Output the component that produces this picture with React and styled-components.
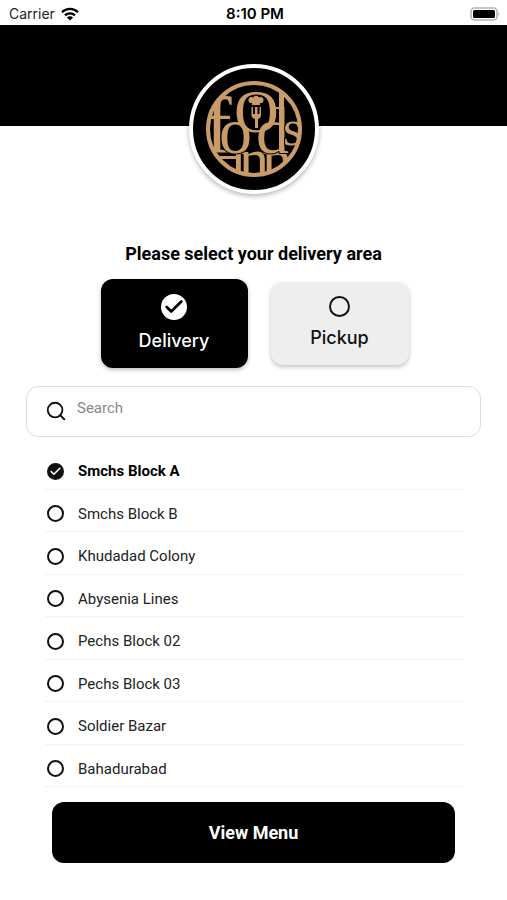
import React, { useState } from "react";
import styled, { createGlobalStyle } from "styled-components";
import { Check, Search } from "lucide-react";

const areas = [
  "Smchs Block A",
  "Smchs Block B",
  "Khudadad Colony",
  "Abysenia Lines",
  "Pechs Block 02",
  "Pechs Block 03",
  "Soldier Bazar",
  "Bahadurabad",
];

const orderTypes = ["Delivery", "Pickup"];

const WifiIcon = () => (
  <svg width="18" height="14" viewBox="0 0 18 14" aria-hidden="true">
    <g fill="none" stroke="#000" strokeWidth="2.3">
      <path d="M1 5.2a11.4 11.4 0 0 1 16 0" />
      <path d="M4 8.4a7.2 7.2 0 0 1 10 0" />
    </g>
    <path d="M9 13.6 5.9 10.5a4.4 4.4 0 0 1 6.2 0z" />
  </svg>
);

const BatteryIcon = () => (
  <svg width="31" height="14" viewBox="0 0 31 14" aria-hidden="true">
    <rect x="1" y="1" width="26" height="12" rx="3.5" fill="#fff" stroke="#b5b5b5" strokeWidth="1.6" />
    <rect x="3" y="3" width="22" height="8" rx="1.5" />
    <path d="M28.5 4.5q2 2.5 0 5z" fill="#b5b5b5" />
  </svg>
);

const Logo = () => (
  <svg width="96" height="96" viewBox="0 0 96 96" role="img" aria-label="Foods Inn">
    <defs>
      <clipPath id="logo-ring">
        <circle cx="48" cy="48" r="46" />
      </clipPath>
    </defs>
    <g
      clipPath="url(#logo-ring)"
      fill="#c89b69"
      fontFamily="Liberation Serif, serif"
    >
      {/* bottom row, cut by the ring */}
      <path d="M14 75h17v3H14z" />
      <text x="24" y="98" fontSize="60">ı</text>
      <text x="33" y="98" fontSize="60">n</text>
      <text x="56" y="98" fontSize="60">n</text>

      {/* middle row */}
      <text x="-1" y="72" fontSize="80">f</text>
      <g stroke="#000" strokeWidth="2" paintOrder="stroke">
        <text x="13" y="72" fontSize="66">o</text>
        <text x="50" y="72" fontSize="66">d</text>
        <text x="77" y="64" fontSize="50">s</text>
      </g>
      <rect x="73" y="8" width="5" height="60" />

      {/* tall O with the chef fork */}
      <text x="28" y="51" fontSize="62">O</text>
      <path d="M46 24v-2a3 3 0 1 1 1-5.500 3.500 3.500 0 0 1 6 0 3 3 0 1 1 1 5.500V24z" />
      <path d="M45.500 26h1.500v7h2v-7h2.500v7h2v-7H55v8q0 3-3 4v9h-3v-9q-3.500-1-3.500-4z" />
    </g>
    <circle cx="48" cy="48" r="46" fill="none" stroke="#c89b69" strokeWidth="4" />
  </svg>
);

const Radio = ({ name, value, checked, onChange, size, tone }) => (
  <RadioWrap $size={size}>
    <RadioInput
      type="radio"
      name={name}
      value={value}
      checked={checked}
      onChange={onChange}
      $tone={tone}
    />
    {checked && (
      <Check size={size - 4} strokeWidth={3} color={tone === "#fff" ? "#000" : "#fff"} />
    )}
  </RadioWrap>
);

const App = () => {
  const [orderType, setOrderType] = useState("Delivery");
  const [area, setArea] = useState("Smchs Block A");
  const [query, setQuery] = useState("");

  const visibleAreas = areas.filter((item) =>
    item.toLowerCase().includes(query.toLowerCase())
  );

  return (
    <>
      <GlobalStyle />
      <Page>
        <StatusBar>
          <Carrier>
            Carrier
            <WifiIcon />
          </Carrier>
          <Clock>8:10 PM</Clock>
          <Battery>
            <BatteryIcon />
          </Battery>
        </StatusBar>
        <Hero />
        <LogoBadge>
          <Logo />
        </LogoBadge>

        <Title>Please select your delivery area</Title>
        <OrderTypes>
          {orderTypes.map((type) => {
            const active = type === orderType;
            return (
              <OrderCard key={type} $active={active}>
                <Radio
                  name="orderType"
                  value={type}
                  checked={active}
                  onChange={() => setOrderType(type)}
                  size={active ? 26 : 21}
                  tone={active ? "#fff" : "#111"}
                />
                {type}
              </OrderCard>
            );
          })}
        </OrderTypes>

        <SearchBox>
          <Search size={22} strokeWidth={2} color="#111" />
          <SearchInput
            type="text"
            placeholder="Search"
            aria-label="Search"
            value={query}
            onChange={(event) => setQuery(event.target.value)}
          />
        </SearchBox>

        <AreaList>
          {visibleAreas.map((item) => (
            <AreaRow key={item} $active={item === area}>
              <Radio
                name="area"
                value={item}
                checked={item === area}
                onChange={() => setArea(item)}
                size={17}
                tone="#111"
              />
              {item}
            </AreaRow>
          ))}
        </AreaList>

        <MenuButton type="button">View Menu</MenuButton>
      </Page>
    </>
  );
};

const GlobalStyle = createGlobalStyle`
  * {
    box-sizing: border-box;
  }
  body {
    margin: 0;
    background: #fff;
    color: #000;
    font-family: Roboto, sans-serif;
  }
`;

const Page = styled.main`
  display: flex;
  flex-direction: column;
  min-height: 100vh;
  padding-bottom: 37px;
`;

const StatusBar = styled.div`
  display: grid;
  grid-template-columns: 1fr auto 1fr;
  align-items: center;
  height: 25px;
  padding: 2px 6px 0 9px;
  font-family: Inter, sans-serif;
  font-size: 14px;
`;

const Carrier = styled.span`
  display: flex;
  align-items: center;
  gap: 6px;
  color: #222;
`;

const Clock = styled.span`
  font-size: 15px;
  line-height: 18px;
  font-weight: 600;
`;

const Battery = styled.span`
  display: flex;
  justify-content: flex-end;
`;

const Hero = styled.div`
  height: 101px;
  background: #000;
`;

const LogoBadge = styled.div`
  display: grid;
  place-items: center;
  align-self: center;
  width: 130px;
  height: 130px;
  margin-top: -62px;
  border: 4px solid #fff;
  border-radius: 50%;
  background: #000;
  box-shadow: 0 2px 5px rgba(0, 0, 0, 0.3);
`;

const Title = styled.h1`
  margin: 48px 0 13px;
  font-size: 18px;
  line-height: 24px;
  font-weight: 700;
  text-align: center;
`;

const OrderTypes = styled.div`
  display: flex;
  justify-content: center;
  align-items: center;
  gap: 23px;
  padding-left: 2px;
`;

const OrderCard = styled.label`
  display: flex;
  flex-direction: column;
  align-items: center;
  justify-content: center;
  gap: 8px;
  width: ${({ $active }) => ($active ? "147px" : "138px")};
  height: ${({ $active }) => ($active ? "89px" : "83px")};
  border-radius: 12px;
  background: ${({ $active }) => ($active ? "#000" : "#eee")};
  color: ${({ $active }) => ($active ? "#fff" : "#111")};
  box-shadow: 0 2px 4px rgba(0, 0, 0, 0.25);
  font-family: Inter, sans-serif;
  font-size: 18px;
  line-height: 26px;
  font-weight: 500;
  cursor: pointer;
`;

const RadioWrap = styled.span`
  display: grid;
  place-items: center;
  flex: none;
  width: ${({ $size }) => $size}px;
  height: ${({ $size }) => $size}px;

  > * {
    grid-area: 1 / 1;
  }
  svg {
    pointer-events: none;
  }
`;

const RadioInput = styled.input`
  appearance: none;
  width: 100%;
  height: 100%;
  margin: 0;
  border: 2px solid ${({ $tone }) => $tone};
  border-radius: 50%;
  cursor: pointer;

  &:checked {
    background: ${({ $tone }) => $tone};
  }
`;

const SearchBox = styled.div`
  display: flex;
  align-items: center;
  gap: 10px;
  height: 51px;
  margin: 18px 26px 10px;
  padding: 0 18px 2px;
  border: 1px solid #ddd;
  border-radius: 12px;

  svg {
    flex: none;
  }
`;

const SearchInput = styled.input`
  flex: 1;
  min-width: 0;
  padding: 0 0 6px;
  border: none;
  outline: none;
  background: transparent;
  font-family: inherit;
  font-size: 15px;

  &::placeholder {
    color: #888;
  }
`;

const AreaList = styled.div`
  display: grid;
  flex: 1;
  grid-auto-rows: minmax(40px, 1fr);
  margin: 0 42px 0 45px;
`;

const AreaRow = styled.label`
  display: flex;
  align-items: center;
  gap: 14px;
  padding: 7px 2px 0;
  border-bottom: 1px solid #f2f2f2;
  color: ${({ $active }) => ($active ? "#000" : "#222")};
  font-size: 15px;
  font-weight: ${({ $active }) => ($active ? 700 : 400)};
  cursor: pointer;
`;

const MenuButton = styled.button`
  height: 61px;
  margin: 15px 52px 0;
  border: none;
  border-radius: 12px;
  background: #000;
  color: #fff;
  font-family: inherit;
  font-size: 18px;
  font-weight: 700;
  cursor: pointer;
`;

export default App;
